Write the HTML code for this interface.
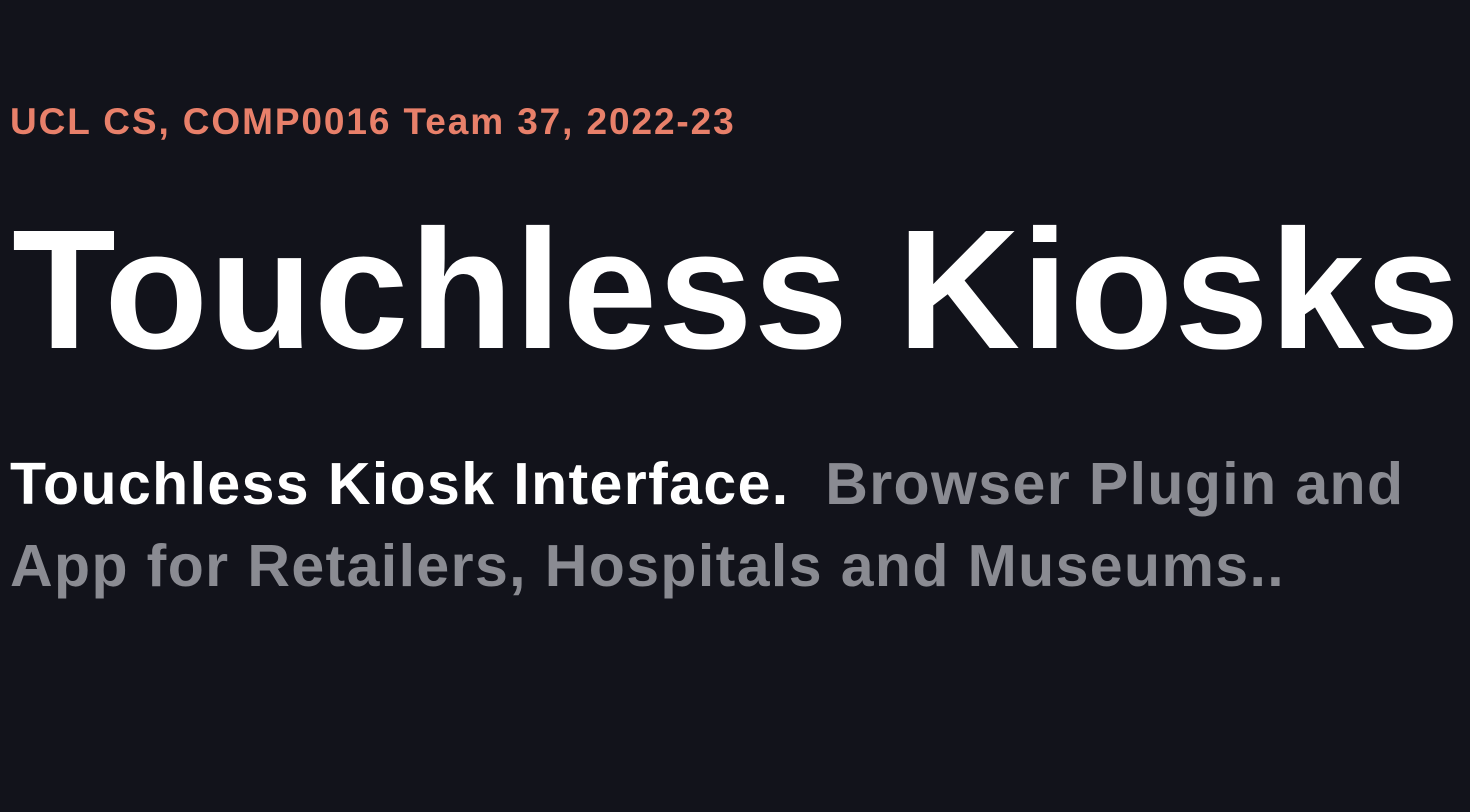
<!DOCTYPE html>
<html><head><meta charset="utf-8"><style>
html,body{margin:0;padding:0;background:#12131b;width:1470px;height:812px;overflow:hidden;font-family:"Liberation Sans",sans-serif}
.tag{position:absolute;left:10px;top:101px;font-size:37px;font-weight:bold;color:#e8806a;white-space:nowrap;letter-spacing:1.9px}
h1{position:absolute;left:12px;top:205px;margin:0;font-size:170px;line-height:1;font-weight:bold;color:#fff;letter-spacing:1px;white-space:nowrap}
.sub{position:absolute;left:10px;top:443px;width:1420px;font-size:59px;line-height:82px;font-weight:bold;color:#8a8b92;letter-spacing:1.4px}
.sub b{color:#fff}
</style></head><body>
<div class="tag">UCL CS, COMP0016 Team 37, 2022-23</div>
<h1>Touchless Kiosks</h1>
<div class="sub"><b>Touchless Kiosk Interface.</b>&nbsp; Browser Plugin and App for Retailers, Hospitals and Museums..</div>
</body></html>
